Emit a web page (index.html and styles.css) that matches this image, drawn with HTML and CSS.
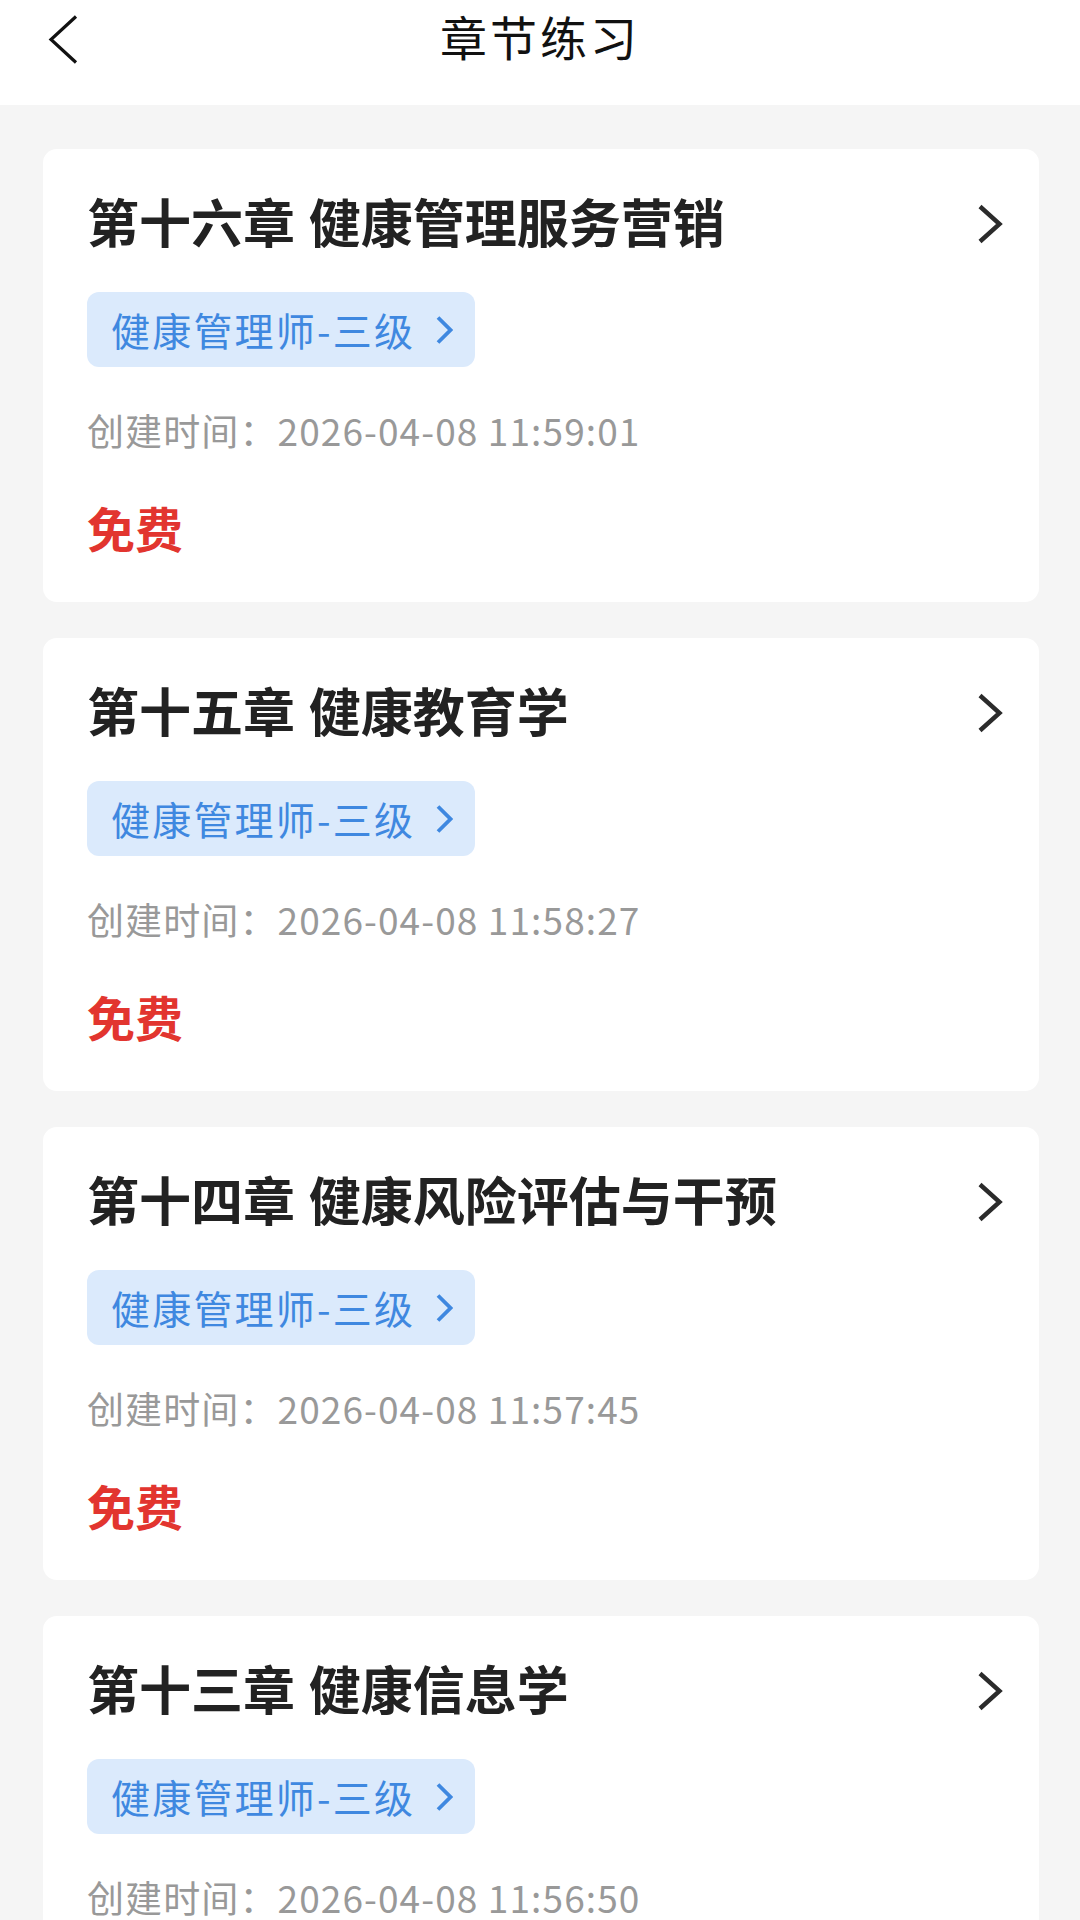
FILE: index.html
```html
<!DOCTYPE html>
<html lang="zh-CN">
<head>
<meta charset="utf-8">
<title>章节练习</title>
<link rel="stylesheet" href="styles.css">
</head>
<body>
<header class="nav">
  <div class="nav-left">
    <svg class="back" width="30" height="50" viewBox="0 0 30 50"><path d="M28 1.5 L3 24.5 L28 47.5" fill="none" stroke="#111" stroke-width="3.2"/></svg>
  </div>
  <h1 class="nav-title">章节练习</h1>
  <div class="nav-right"></div>
</header>
<main class="list">
  <section class="card">
    <div class="card-head">
      <h2 class="card-title">第十六章 健康管理服务营销</h2>
      <svg class="arrow" width="26" height="40" viewBox="0 0 26 40"><path d="M3 2.5 L22.5 20 L3 37.5" fill="none" stroke="#2b2b2b" stroke-width="4.4"/></svg>
    </div>
    <div class="tag"><span class="tag-text">健康管理师-三级</span><svg class="tag-arrow" width="18" height="30" viewBox="0 0 18 30"><path d="M3 2.5 L15.5 15 L3 27.5" fill="none" stroke="#3f88e0" stroke-width="3.8"/></svg></div>
    <p class="date">创建时间：2026-04-08 11:59:01</p>
    <p class="price">免费</p>
  </section>
  <section class="card">
    <div class="card-head">
      <h2 class="card-title">第十五章 健康教育学</h2>
      <svg class="arrow" width="26" height="40" viewBox="0 0 26 40"><path d="M3 2.5 L22.5 20 L3 37.5" fill="none" stroke="#2b2b2b" stroke-width="4.4"/></svg>
    </div>
    <div class="tag"><span class="tag-text">健康管理师-三级</span><svg class="tag-arrow" width="18" height="30" viewBox="0 0 18 30"><path d="M3 2.5 L15.5 15 L3 27.5" fill="none" stroke="#3f88e0" stroke-width="3.8"/></svg></div>
    <p class="date">创建时间：2026-04-08 11:58:27</p>
    <p class="price">免费</p>
  </section>
  <section class="card">
    <div class="card-head">
      <h2 class="card-title">第十四章 健康风险评估与干预</h2>
      <svg class="arrow" width="26" height="40" viewBox="0 0 26 40"><path d="M3 2.5 L22.5 20 L3 37.5" fill="none" stroke="#2b2b2b" stroke-width="4.4"/></svg>
    </div>
    <div class="tag"><span class="tag-text">健康管理师-三级</span><svg class="tag-arrow" width="18" height="30" viewBox="0 0 18 30"><path d="M3 2.5 L15.5 15 L3 27.5" fill="none" stroke="#3f88e0" stroke-width="3.8"/></svg></div>
    <p class="date">创建时间：2026-04-08 11:57:45</p>
    <p class="price">免费</p>
  </section>
  <section class="card">
    <div class="card-head">
      <h2 class="card-title">第十三章 健康信息学</h2>
      <svg class="arrow" width="26" height="40" viewBox="0 0 26 40"><path d="M3 2.5 L22.5 20 L3 37.5" fill="none" stroke="#2b2b2b" stroke-width="4.4"/></svg>
    </div>
    <div class="tag"><span class="tag-text">健康管理师-三级</span><svg class="tag-arrow" width="18" height="30" viewBox="0 0 18 30"><path d="M3 2.5 L15.5 15 L3 27.5" fill="none" stroke="#3f88e0" stroke-width="3.8"/></svg></div>
    <p class="date">创建时间：2026-04-08 11:56:50</p>
    <p class="price">免费</p>
  </section>
</main>
</body>
</html>
```

FILE: styles.css
```css
html, body {
  margin: 0;
  padding: 0;
}
body {
  width: 1080px;
  height: 1920px;
  overflow: hidden;
  background: #f5f5f5;
  font-family: "Noto Sans CJK SC", "Noto Sans", sans-serif;
}
.nav {
  height: 105px;
  background: #ffffff;
  display: grid;
  grid-template-columns: 1fr auto 1fr;
  align-items: start;
}
.nav-left {
  padding: 15px 0 0 48px;
}
.back {
  display: block;
}
.nav-title {
  margin: 8px 0 0;
  font-size: 47px;
  line-height: 56px;
  font-weight: 400;
  color: #111111;
  letter-spacing: 3px;
}
.list {
  display: flex;
  flex-direction: column;
  gap: 36px;
  padding: 44px 41px 0 43px;
}
.card {
  background: #ffffff;
  border-radius: 14px;
  padding: 42px 36px 45px 44px;
  display: flex;
  flex-direction: column;
  align-items: flex-start;
}
.card-head {
  align-self: stretch;
  display: flex;
  align-items: center;
  justify-content: space-between;
  height: 60px;
}
.card-title {
  margin: 0;
  font-size: 52px;
  line-height: 60px;
  font-weight: 700;
  color: #222222;
  word-spacing: 2px;
}
.arrow {
  display: block;
  margin-top: 6px;
}
.tag {
  margin-top: 41px;
  height: 75px;
  box-sizing: border-box;
  display: inline-flex;
  align-items: center;
  gap: 20px;
  padding: 0 22px 0 24px;
  background: #dbeafc;
  border-radius: 12px;
}
.tag-text {
  font-size: 39px;
  line-height: 75px;
  color: #3f88e0;
  letter-spacing: 2.2px;
}
.tag-arrow {
  display: block;
}
.date {
  margin: 40px 0 0;
  font-size: 37px;
  line-height: 46px;
  color: #999999;
  letter-spacing: 1.1px;
}
.price {
  margin: 44px 0 0;
  font-size: 48px;
  line-height: 60px;
  font-weight: 700;
  color: #e2352f;
}
```
